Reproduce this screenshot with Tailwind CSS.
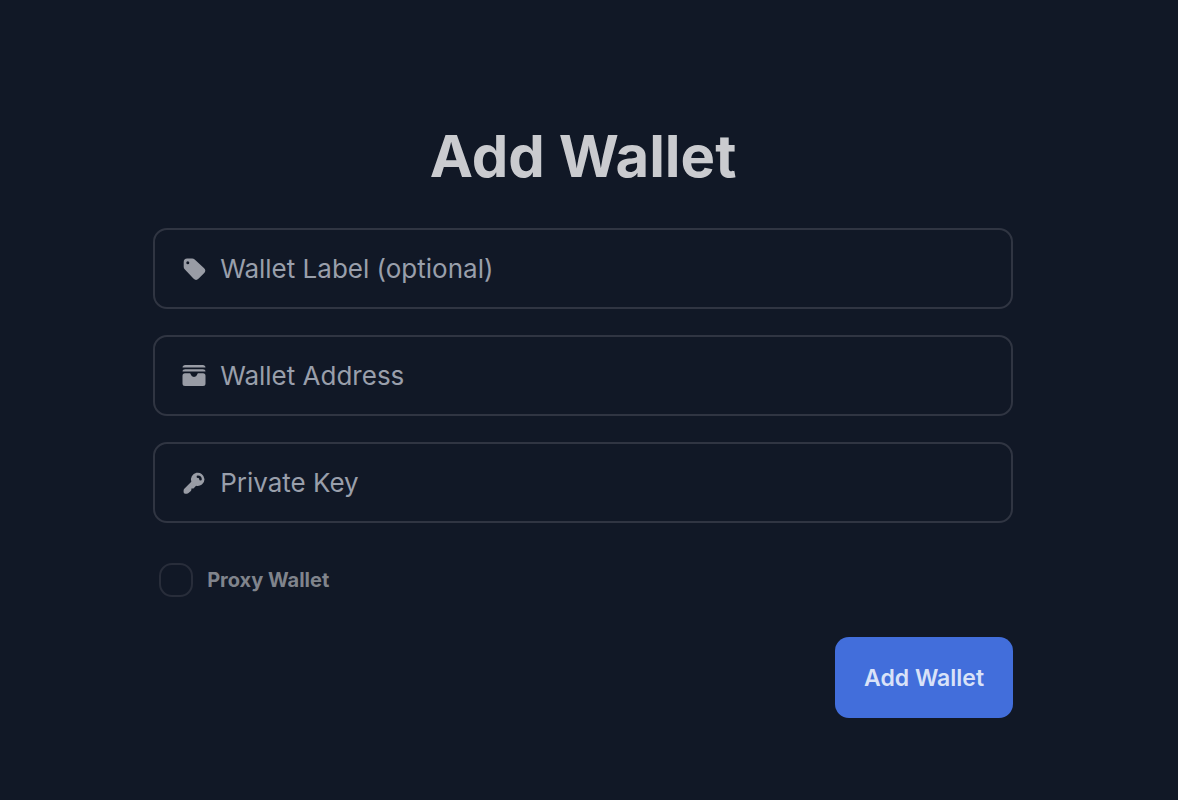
<!DOCTYPE html>
<html lang="en">
<head>
    <meta charset="UTF-8">
    <meta name="viewport" content="width=device-width, initial-scale=1.0">
    <title>Add Wallet</title>
    <script src="https://cdn.jsdelivr.net/npm/@tailwindcss/browser@4"></script>
</head>
<body class="min-h-screen bg-[#111826] font-['Inter',sans-serif]">

    <main class="pt-[126px] pb-20 pl-[13%] pr-[14%]">
        <h1 class="text-center text-[58px] leading-[60px] font-bold text-[#cacbcf]">Add Wallet</h1>

        <!-- Wallet Form -->
        <form class="mt-[42px] flex flex-col">
            <div class="flex flex-col gap-[26px]">
                <label class="flex h-[81px] items-center gap-3 rounded-[14px] border-2 border-[#303542] px-[25px] text-[#999ca5]">
                    <svg class="size-7 shrink-0" viewBox="0 0 28 28" fill="currentColor" aria-hidden="true">
                        <path fill-rule="evenodd" clip-rule="evenodd" d="M7.2 3.6h4.9c1 0 1.9.4 2.6 1l9.2 8.4a3.7 3.7 0 0 1 .1 5.3l-5.3 5.3a3.7 3.7 0 0 1-5.3-.1l-8.7-9.2a3.7 3.7 0 0 1-1-2.6V7.2a3.6 3.6 0 0 1 3.5-3.6ZM7.8 9.3a1.5 1.5 0 1 0 0-3 1.5 1.5 0 0 0 0 3Z"/>
                    </svg>
                    <input type="text" name="label" aria-label="Wallet Label" placeholder="Wallet Label (optional)" class="min-w-0 grow bg-transparent text-[26px] leading-9 outline-none placeholder:text-[#999fab]">
                </label>

                <label class="flex h-[81px] items-center gap-3 rounded-[14px] border-2 border-[#303542] px-[25px] text-[#999ca5]">
                    <svg class="size-7 shrink-0" viewBox="0 0 28 28" fill="currentColor" aria-hidden="true">
                        <path d="M2.5 5.5C2.5 4 3.7 3 5.2 3h17.6c1.5 0 2.7 1 2.7 2.5Z"/>
                        <path d="M2.5 9.5C2.5 8 3.7 7.2 5.2 7.2h17.6c1.5 0 2.7.8 2.7 2.3Z"/>
                        <path d="M5 11.2h4.4c.8 0 1.2.5 1.4 1.3a3.3 3.3 0 0 0 6.4 0c.2-.8.6-1.3 1.4-1.3H23a2.5 2.5 0 0 1 2.5 2.5v7.8A2.5 2.5 0 0 1 23 24H5a2.5 2.5 0 0 1-2.5-2.5v-7.8A2.5 2.5 0 0 1 5 11.2Z"/>
                    </svg>
                    <input type="text" name="address" aria-label="Wallet Address" placeholder="Wallet Address" class="min-w-0 grow bg-transparent text-[26px] leading-9 outline-none placeholder:text-[#999fab]">
                </label>

                <label class="flex h-[81px] items-center gap-3 rounded-[14px] border-2 border-[#303542] px-[25px] text-[#999ca5]">
                    <svg class="size-7 shrink-0" viewBox="0 0 28 28" fill="currentColor" aria-hidden="true">
                        <path fill-rule="evenodd" clip-rule="evenodd" d="M24.5 10.2a6.8 6.8 0 0 1-8.4 6.6l-2.1 2.1c-.4.4-.8.5-1.4.5h-1.2v1.1c0 .6-.2 1-.5 1.4L8.5 24a2.6 2.6 0 0 1-1.8.7H5.2A1.6 1.6 0 0 1 3.6 23v-1.4c0-.7.3-1.3.7-1.8l7-7a6.8 6.8 0 1 1 13.2-2.6ZM17.9 6.4a1.3 1.3 0 0 0 0 2.6c.7 0 1.3.5 1.3 1.2a1.3 1.3 0 0 0 2.6 0 3.9 3.9 0 0 0-3.9-3.8Z"/>
                    </svg>
                    <input type="password" name="key" aria-label="Private Key" placeholder="Private Key" class="min-w-0 grow bg-transparent text-[26px] leading-9 outline-none placeholder:text-[#999fab]">
                </label>
            </div>

            <label class="mt-10 flex items-center gap-3.5 self-start pl-1.5 text-[20px] leading-7 font-bold text-[#80848c]">
                <input type="checkbox" name="proxy" class="size-[34px] appearance-none rounded-[13px] border-2 border-[#282d3a] checked:bg-[#426edb]">
                Proxy Wallet
            </label>

            <button type="submit" class="mt-10 h-[81px] self-end rounded-[14px] bg-[#426edb] px-[29px] text-[23px] leading-8 font-semibold text-[#d9e2f8] hover:bg-[#365fc7]">Add Wallet</button>
        </form>
    </main>

</body>
</html>
